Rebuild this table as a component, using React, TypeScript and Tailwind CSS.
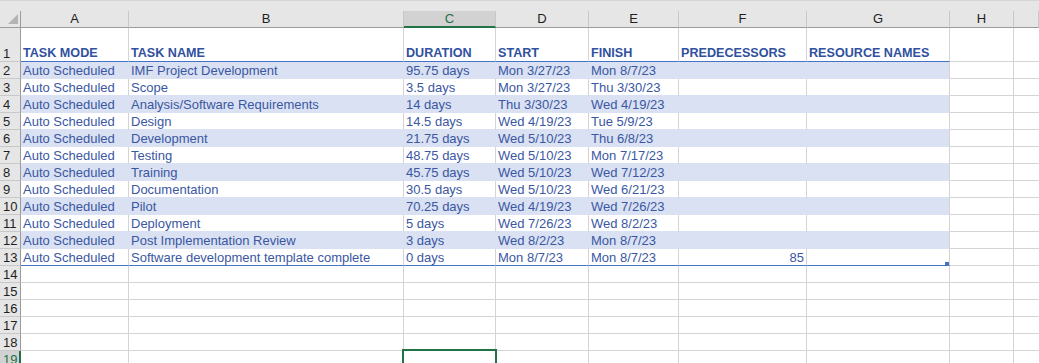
import React from "react";

type Col = { key: string; w: string };

const cols: Col[] = [
  { key: "A", w: "w-[108px]" },
  { key: "B", w: "w-[275px]" },
  { key: "C", w: "w-[92px]" },
  { key: "D", w: "w-[93px]" },
  { key: "E", w: "w-[90px]" },
  { key: "F", w: "w-[128px]" },
  { key: "G", w: "w-[143px]" },
  { key: "H", w: "w-[64px]" },
  { key: "I", w: "flex-1" },
];

const header = ["TASK MODE", "TASK NAME", "DURATION", "START", "FINISH", "PREDECESSORS", "RESOURCE NAMES"];

const tasks: string[][] = [
  ["Auto Scheduled", "IMF Project Development", "95.75 days", "Mon 3/27/23", "Mon 8/7/23"],
  ["Auto Scheduled", "Scope", "3.5 days", "Mon 3/27/23", "Thu 3/30/23"],
  ["Auto Scheduled", "Analysis/Software Requirements", "14 days", "Thu 3/30/23", "Wed 4/19/23"],
  ["Auto Scheduled", "Design", "14.5 days", "Wed 4/19/23", "Tue 5/9/23"],
  ["Auto Scheduled", "Development", "21.75 days", "Wed 5/10/23", "Thu 6/8/23"],
  ["Auto Scheduled", "Testing", "48.75 days", "Wed 5/10/23", "Mon 7/17/23"],
  ["Auto Scheduled", "Training", "45.75 days", "Wed 5/10/23", "Wed 7/12/23"],
  ["Auto Scheduled", "Documentation", "30.5 days", "Wed 5/10/23", "Wed 6/21/23"],
  ["Auto Scheduled", "Pilot", "70.25 days", "Wed 4/19/23", "Wed 7/26/23"],
  ["Auto Scheduled", "Deployment", "5 days", "Wed 7/26/23", "Wed 8/2/23"],
  ["Auto Scheduled", "Post Implementation Review", "3 days", "Wed 8/2/23", "Mon 8/7/23"],
  ["Auto Scheduled", "Software development template complete", "0 days", "Mon 8/7/23", "Mon 8/7/23", "85"],
];

// colours of each cell's right / bottom line, by row kind
function cellClass(row: number, c: number): string {
  const inTable = row <= 13 && c <= 6;
  if (!inTable) {
    return c === 8 ? "border-b border-b-[#d4d4d4]" : "border-r border-b border-r-[#d4d4d4] border-b-[#d4d4d4]";
  }
  if (row === 1 || row === 13) {
    return "border-r border-b border-r-[#d4d4d4] border-b-[#4472c4] bg-white";
  }
  if (row % 2 === 0) {
    return c === 6
      ? "border-r border-b border-r-[#d4d4d4] border-b-[#d9e1f2] bg-[#d9e1f2]"
      : "border-r border-b border-r-[#d9e1f2] border-b-[#d9e1f2] bg-[#d9e1f2]";
  }
  return "border-r border-b border-r-[#d4d4d4] border-b-[#d9e1f2] bg-white";
}

const RowHead: React.FC<{ n: number }> = ({ n }) => (
  <div
    className={
      n === 19
        ? "w-[21px] shrink-0 flex items-end pl-[3px] bg-[#d2d2d2] border-r-2 border-r-[#217346] border-b border-b-[#c8c8c8] text-[13px] leading-[15px] text-[#217346]"
        : "w-[21px] shrink-0 flex items-end pl-[3px] bg-[#e6e6e6] border-r border-r-[#9b9b9b] border-b border-b-[#c8c8c8] text-[13px] leading-[15px] text-[#1f1f1f]"
    }
  >
    {n}
  </div>
);

export default function App() {
  const rows = Array.from({ length: 19 }, (_, i) => i + 1);

  return (
    <div className="relative w-[1039px] h-[363px] overflow-hidden bg-white font-['Liberation_Sans',Arial,sans-serif]">
      {/* bande du haut */}
      <div className="h-[11px] bg-[#e6e6e6] border-t border-t-[#d6d6d6]" />

      {/* en-têtes de colonnes */}
      <div className="flex h-[17px] bg-[#e6e6e6]">
        <div className="relative w-[21px] shrink-0 border-r border-r-[#9b9b9b] border-b border-b-[#9b9b9b]">
          <div className="absolute left-[8px] top-[3px] w-0 h-0 border-l-[10px] border-l-transparent border-b-[10px] border-b-[#b4b4b4]" />
        </div>
        {cols.map((c) => (
          <div
            key={c.key}
            className={
              c.key === "C"
                ? `${c.w} shrink-0 flex justify-center bg-[#d2d2d2] border-r border-r-[#c8c8c8] border-b-2 border-b-[#217346] text-[13px] leading-[16px] text-[#217346]`
                : `${c.w} shrink-0 flex justify-center border-r border-r-[#c8c8c8] border-b border-b-[#9b9b9b] text-[13px] leading-[16px] text-[#1f1f1f]`
            }
          >
            {c.key === "I" ? "" : c.key}
          </div>
        ))}
      </div>

      {/* lignes */}
      {rows.map((r) => {
        const data = r === 1 ? header : r <= 13 ? tasks[r - 2] : [];
        return (
          <div key={r} className={r === 1 ? "flex h-[34px]" : "flex h-[17px]"}>
            <RowHead n={r} />
            {cols.map((c, ci) => {
              const txt = data[ci] ?? "";
              const right = ci === 5 && r === 13;
              return (
                <div
                  key={c.key}
                  className={`${c.w} ${cellClass(r, ci)} relative shrink-0 flex items-end overflow-hidden whitespace-nowrap px-[2px] leading-[15px] ${
                    r === 1 ? "font-bold text-[12.6px] text-[#3050a0]" : "text-[13px] text-[#3b57a3]"
                  } ${right ? "justify-end" : ""}`}
                >
                  {txt}
                  {r === 13 && ci === 6 && (
                    <div className="absolute right-0 bottom-[-1px] w-[4px] h-[4px] bg-[#4472c4]" />
                  )}
                </div>
              );
            })}
          </div>
        );
      })}

      {/* cellule active C19 */}
      <div className="absolute left-[402px] top-[349px] w-[95px] h-[20px] border-2 border-[#217346]" />
    </div>
  );
}
